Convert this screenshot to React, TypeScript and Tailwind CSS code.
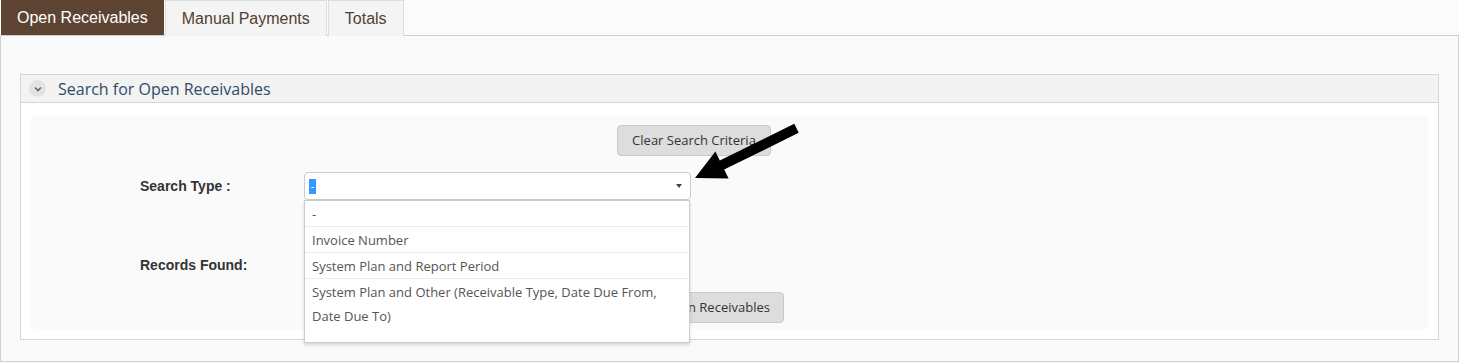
import { useState } from "react";

const options = [
  "-",
  "Invoice Number",
  "System Plan and Report Period",
  "System Plan and Other (Receivable Type, Date Due From, Date Due To)",
];

function Chevron() {
  return (
    <span className="flex h-[17px] w-[17px] items-center justify-center rounded-full bg-[#e3e3e3]">
      <svg width="8" height="6" viewBox="0 0 8 6">
        <path d="M1 1.5 L4 4.5 L7 1.5" fill="none" stroke="#666" strokeWidth="1.6" />
      </svg>
    </span>
  );
}

export default function App() {
  const [tab, setTab] = useState(0);
  const tabs = ["Open Receivables", "Manual Payments", "Totals"];

  return (
    <div className="relative h-[363px] w-[1459px] bg-[#fbfbfb] font-['Liberation_Sans',Arial,sans-serif]">
      {/* Tabs */}
      <div className="flex h-[35px] pl-px">
        {tabs.map((t, i) => (
          <button
            key={t}
            onClick={() => setTab(i)}
            className={
              i === tab
                ? "h-[35px] bg-[#5d4432] px-4 text-[16px] text-white"
                : "-mb-px ml-px h-[36px] border border-b-0 border-[#dcdcdc] bg-[#f4f4f4] px-4 text-[16px] text-[#53402f]"
            }
          >
            {t}
          </button>
        ))}
      </div>

      {/* Outer panel */}
      <div className="h-[327px] border border-[#cfcfcf] bg-[#fafafa] px-[19px] pt-[38px] pb-[20px]">
        <div className="border border-[#d6d6d6] bg-white">
          <div className="flex h-[28px] items-center gap-3 border-b border-[#d6d6d6] bg-[#f3f3f3] pl-[8px] font-['Open_Sans',sans-serif] text-[16px] text-[#2f4b66]">
            <Chevron />
            <span className="leading-none">Search for Open Receivables</span>
          </div>
          <div className="p-[10px] pt-[13px]">
            <div className="h-[213px] rounded bg-[#fafafa] pt-[9px]">
              <div className="pl-[586px]">
                <button className="h-[31px] w-[154px] rounded border border-[#c9c9c9] bg-[#dddddd] font-['Open_Sans',sans-serif] text-[13px] text-[#333]">
                  Clear Search Criteria
                </button>
              </div>

              <div className="mt-[16px] flex items-center pl-[109px]">
                <span className="w-[164px] text-[14px] font-bold text-[#333]">Search Type :</span>
                <div className="relative">
                  <div className="flex h-[28px] w-[387px] items-center justify-between rounded-sm border border-[#cccccc] bg-white pr-[8px] pl-[4px]">
                    <span className="flex h-[15px] w-[7px] items-center justify-center bg-[#3399ff] text-[11px] leading-none text-white">
                      -
                    </span>
                    <span className="h-0 w-0 border-x-[3px] border-t-[4px] border-x-transparent border-t-[#444]" />
                  </div>
                  {/* Open dropdown list */}
                  <div className="absolute top-[28px] left-0 z-10 w-[386px] border border-[#cccccc] bg-white pb-[14px] font-['Open_Sans',sans-serif] text-[13px] text-[#555] shadow-[0_2px_3px_rgba(0,0,0,0.15)]">
                    {options.map((o, i) => (
                      <div
                        key={o}
                        className={
                          "px-[7px] pt-px leading-[24px]" + (i < options.length - 1 ? " border-b border-[#ececec]" : "")
                        }
                      >
                        {o}
                      </div>
                    ))}
                  </div>
                </div>
              </div>

              <div className="mt-[55px] pl-[109px] text-[14px] font-bold text-[#333]">Records Found:</div>

              <div className="mt-[16px] pl-[573px]">
                <button className="h-[31px] w-[180px] rounded border border-[#c9c9c9] bg-[#dddddd] font-['Open_Sans',sans-serif] text-[13px] text-[#333]">
                  Search Open Receivables
                </button>
              </div>
            </div>
          </div>
        </div>
      </div>

      {/* Annotation arrow */}
      <svg className="pointer-events-none absolute top-0 left-0 z-20" width="1459" height="363">
        <polygon
          points="695,178 715.4,151.5 719.8,160.5 794.3,123.8 798.7,132.8 724.2,169.5 728.6,178.5"
          fill="#000"
        />
      </svg>
    </div>
  );
}
